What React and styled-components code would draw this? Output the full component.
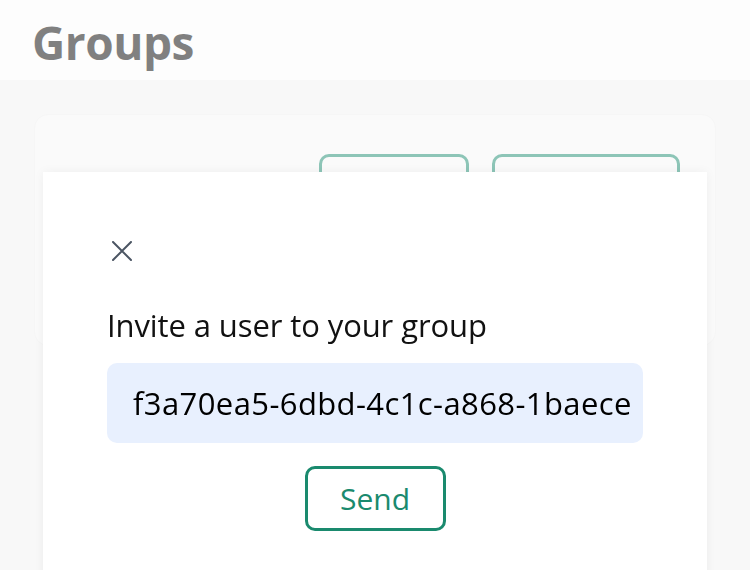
import React from 'react';
import styled, { createGlobalStyle } from 'styled-components';

const Global = createGlobalStyle`
  body {
    margin: 0;
    background: #f1f1f1;
    font-family: "Open Sans", "Noto Sans", sans-serif;
  }
`;

const Header = styled.header`
  height: 80px;
  box-sizing: border-box;
  background: #fbfbfb;
  padding: 4px 0 0 32px;
  display: flex;
  align-items: center;
`;

const Title = styled.h1`
  margin: 0;
  font-size: 46px;
  font-weight: 700;
  color: #000;
  letter-spacing: -0.5px;
`;

const Main = styled.main`
  padding: 34px 34px 0;
`;

const Card = styled.section`
  height: 232px;
  box-sizing: border-box;
  background: #f4f4f4;
  border: 1px solid #ececec;
  border-radius: 14px;
  padding: 39px 35px;
  display: flex;
  justify-content: flex-end;
  gap: 23px;
`;

const OutlineButton = styled.button`
  width: ${p => p.$w}px;
  height: 56px;
  border: 3px solid #1a8a6e;
  border-radius: 10px;
  background: transparent;
  color: #1a8a6e;
  font-family: inherit;
  font-size: 26px;
`;

const Backdrop = styled.div`
  position: fixed;
  inset: 0;
  background: rgba(255, 255, 255, 0.5);
  display: flex;
  justify-content: center;
  padding-top: 172px;
`;

const Modal = styled.div`
  width: 664px;
  height: 420px;
  box-sizing: border-box;
  background: #fff;
  box-shadow: 0 0 10px rgba(0, 0, 0, 0.05);
  padding: 68px 64px 0 64px;
  display: flex;
  flex-direction: column;
`;

const Close = styled.button`
  width: 22px;
  height: 22px;
  padding: 0;
  margin-left: 4px;
  border: none;
  background: none;
  display: flex;
  align-items: center;
  justify-content: center;
`;

const Label = styled.label`
  margin-top: 42px;
  font-size: 31px;
  color: #111;
  line-height: 42px;
  letter-spacing: -0.1px;
`;

const Input = styled.input`
  margin-top: 17px;
  height: 80px;
  box-sizing: border-box;
  width: 536px;
  border: none;
  border-radius: 10px;
  background: #e8f0fe;
  padding: 0 13px 0 26px;
  font-family: inherit;
  font-size: 31px;
  letter-spacing: 0.4px;
  color: #000;
  outline: none;
`;

const Send = styled.button`
  align-self: center;
  margin-top: 23px;
  width: 141px;
  height: 65px;
  border: 3px solid #1a8a6e;
  border-radius: 10px;
  background: #fff;
  color: #1a8a6e;
  font-family: inherit;
  font-size: 30px;
`;

const App = () => (
  <>
    <Global />
    <Header>
      <Title>Groups</Title>
    </Header>
    <Main>
      <Card>
        <OutlineButton $w={150}>Join</OutlineButton>
        <OutlineButton $w={188}>Create</OutlineButton>
      </Card>
    </Main>
    <Backdrop>
      <Modal>
        <Close aria-label="close">
          <svg width="20" height="20" viewBox="0 0 20 20">
            <path d="M1 1 L19 19 M19 1 L1 19" stroke="#4b5563" strokeWidth="2" strokeLinecap="round" />
          </svg>
        </Close>
        <Label htmlFor="invite">Invite a user to your group</Label>
        <Input id="invite" readOnly value="f3a70ea5-6dbd-4c1c-a868-1baece42d7f9" />
        <Send>Send</Send>
      </Modal>
    </Backdrop>
  </>
);

export default App;
